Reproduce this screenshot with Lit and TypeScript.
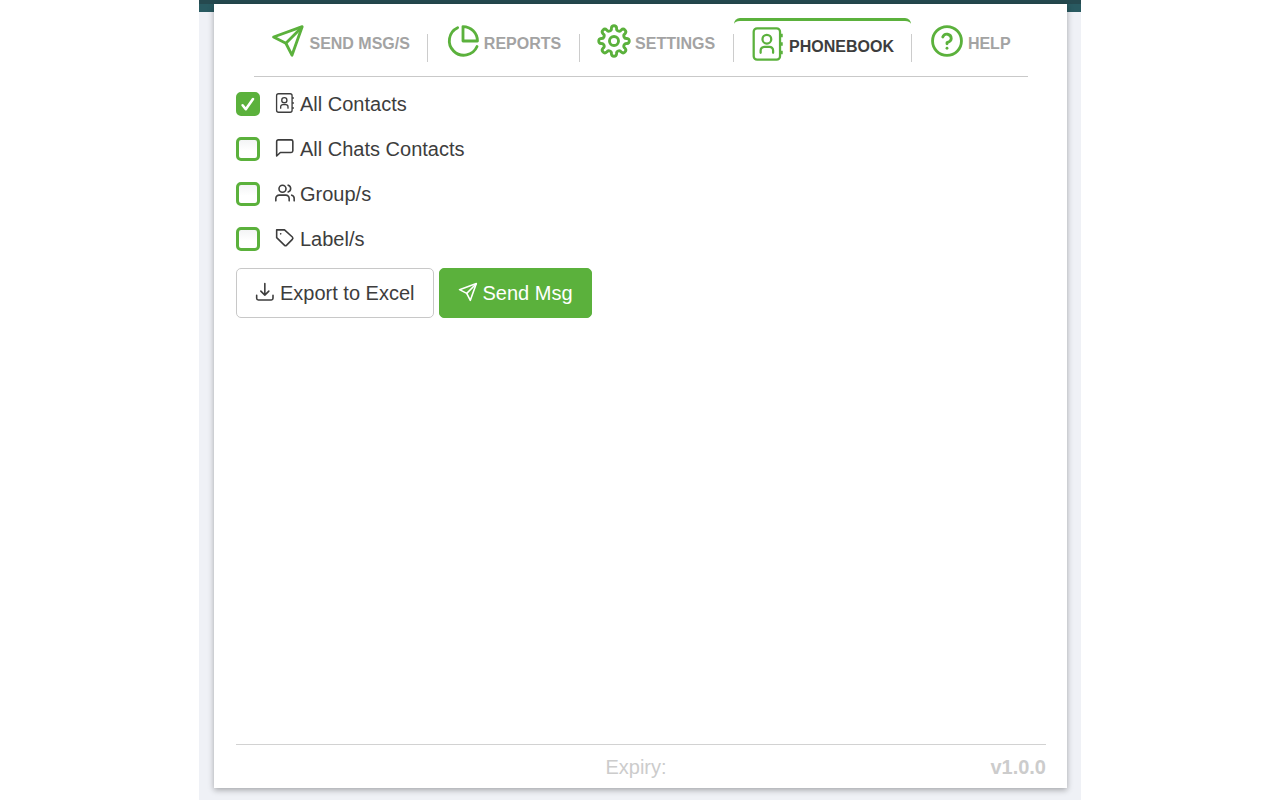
import { LitElement, html, css, svg } from "lit";
import { customElement, state } from "lit/decorators.js";
import { classMap } from "lit/directives/class-map.js";

// Outline of a cog: eight rounded teeth joined by rounded valleys.
function cogPath(teeth = 8, radius = 9.3, half = 11.5): string {
  const at = (deg: number) => {
    const a = (deg * Math.PI) / 180;
    return `${(12 + radius * Math.sin(a)).toFixed(2)} ${(12 - radius * Math.cos(a)).toFixed(2)}`;
  };
  let d = `M${at(-half)}`;
  for (let i = 0; i < teeth; i++) {
    const mid = (i * 360) / teeth;
    d += `A1.86 1.86 0 0 1 ${at(mid + half)}A1.8 1.8 0 0 0 ${at(mid + 360 / teeth - half)}`;
  }
  return d + "Z";
}

const icons = {
  send: svg`<path d="M1.8 9.2 22 1.9 14.8 22 10.5 13.6Z"/><path d="M10.5 13.6 21.6 2.4" />`,
  pie: svg`<path d="M21.9 15.9A10.2 10.2 0 1 1 8.2 2.6"/><path d="M22.2 12A10.2 10.2 0 0 0 12 1.8V12Z"/>`,
  gear: svg`<circle cx="12" cy="12" r="3.2"/><path d=${cogPath()}/>`,
  book: svg`<rect x="1.9" y=".9" width="18.6" height="22.2" rx="2.4"/><circle cx="11.2" cy="8.6" r="3.1"/><path d="M6.8 18.2v-1.6a2.6 2.6 0 0 1 2.6-2.6h3.6a2.6 2.6 0 0 1 2.6 2.6V18.2"/><path stroke-linecap="butt" d="M21.6 4.8v2.5M21.6 10.8v2.5M21.6 16.8v2.5"/>`,
  help: svg`<circle cx="12" cy="12" r="10.2"/><path d="M9 9.2a3.1 3.1 0 0 1 6 1c0 2-3 3-3 3v.8"/><path d="M12 17.1v.1"/>`,
  chat: svg`<path d="M21.4 15.4a2 2 0 0 1-2 2H6.4l-4.4 4.2V4.2a2 2 0 0 1 2-2h15.4a2 2 0 0 1 2 2Z"/>`,
  users: svg`<path d="M17 21.4v-2.9a4 4 0 0 0-4-4H5a4 4 0 0 0-4 4v2.9M23 21.4v-2.9a4 4 0 0 0-3-3.9M15.8 2.6a4.3 4.3 0 0 1 0 8.2"/><circle cx="9" cy="6.8" r="4.2"/>`,
  tag: svg`<path d="m20.8 13.6-6.8 7a2 2 0 0 1-2.8 0L2 11.6V2.2h9.4l9.4 8.6a2 2 0 0 1 0 2.8ZM6.8 7h.1"/>`,
  download: svg`<path d="M2 16v3.600a2 2 0 0 0 2 2h15.6a2 2 0 0 0 2-2V16M7 11l4.8 4.8L16.6 11M11.8 15.8V1.8"/>`,
};
type IconName = keyof typeof icons;

@customElement("ui-icon")
class UiIcon extends LitElement {
  static properties = { name: {}, weight: {} };
  declare name: IconName;
  declare weight: string;
  static styles = css`
    :host { display: block; flex: none; }
    svg { display: block; width: 100%; height: 100%; overflow: visible; fill: none; stroke: currentColor; stroke-linecap: round; stroke-linejoin: round; }
  `;
  render() {
    return html`<svg viewBox="0 0 24 24" stroke-width=${this.weight ?? "1.9"} aria-hidden="true">${icons[this.name]}</svg>`;
  }
}

@customElement("app-root")
class AppRoot extends LitElement {
  @state() private active = "phonebook";

  private tabs: { id: string; label: string; icon: IconName }[] = [
    { id: "send", label: "SEND MSG/S", icon: "send" },
    { id: "reports", label: "REPORTS", icon: "pie" },
    { id: "settings", label: "SETTINGS", icon: "gear" },
    { id: "phonebook", label: "PHONEBOOK", icon: "book" },
    { id: "help", label: "HELP", icon: "help" },
  ];

  private sources: { id: string; label: string; icon: IconName; checked: boolean }[] = [
    { id: "contacts", label: "All Contacts", icon: "book", checked: true },
    { id: "chats", label: "All Chats Contacts", icon: "chat", checked: false },
    { id: "groups", label: "Group/s", icon: "users", checked: false },
    { id: "labels", label: "Label/s", icon: "tag", checked: false },
  ];

  static styles = css`
    :host {
      --green: #5bb13c;
      display: block;
      background: #fff;
      color: #3d3d3d;
      font: 20px/24px "Liberation Sans", Arial, sans-serif;
    }
    * { box-sizing: border-box; }
    .backdrop {
      display: flex;
      max-width: 882px;
      min-height: 100vh;
      margin: 0 auto;
      padding: 4px 14px 12px 15px;
      background: linear-gradient(#25494f 4px, #295a61 4px, #295a61 12px, #eff1f6 12px);
    }
    .card {
      flex: 1;
      display: flex;
      flex-direction: column;
      padding: 14px 21px 0 22px;
      background: #fff;
      box-shadow: 0 2px 6px rgba(0, 0, 0, 0.32);
    }
    .tabs {
      display: flex;
      height: 59px;
      margin: 0 18px;
      padding: 0;
      list-style: none;
      border-bottom: 1px solid #c9c9c9;
    }
    .tab { display: flex; flex: auto; }
    .tab + .tab::before {
      content: "";
      width: 1px;
      height: 28px;
      margin-top: 16px;
      background: #ccc;
    }
    .link {
      flex: 1;
      display: flex;
      justify-content: center;
      gap: 4px;
      height: 48px;
      padding-top: 6px;
      color: #a3a3a3;
      font-size: 16px;
      font-weight: bold;
      line-height: 40px;
      text-decoration: none;
      white-space: nowrap;
    }
    .link ui-icon { width: 34px; height: 34px; color: var(--green); }
    .active .link {
      border-top: 3px solid var(--green);
      border-radius: 6px;
      color: #3d3d3d;
    }
    .sources {
      display: flex;
      flex-direction: column;
      align-items: flex-start;
      gap: 21px;
      margin: 0;
      padding: 15px 0 17px;
      border: 0;
    }
    .source { display: flex; align-items: center; gap: 5px; cursor: pointer; }
    .source ui-icon, .button ui-icon { width: 20px; height: 20px; margin-bottom: 3px; }
    .box {
      appearance: none;
      width: 24px;
      height: 24px;
      margin: 0 10px 0 0;
      border: 3px solid var(--green);
      border-radius: 5px;
      background: linear-gradient(#f3f4f5, #fff 60%);
    }
    .box:checked {
      background: var(--green) url("data:image/svg+xml,%3Csvg xmlns='http://www.w3.org/2000/svg' viewBox='0 0 18 18'%3E%3Cpath d='M3.6 10.3 6.8 14.2 14 4' fill='none' stroke='white' stroke-width='2.6' stroke-linejoin='round' stroke-linecap='round'/%3E%3C/svg%3E") center / 18px no-repeat;
    }
    .actions { display: flex; flex-wrap: wrap; gap: 5px; }
    .button {
      display: flex;
      align-items: center;
      gap: 5px;
      height: 50px;
      padding: 0 18px;
      border: 1px solid #c8c8c8;
      border-radius: 5px;
      background: #fff;
      color: inherit;
      font: inherit;
      cursor: pointer;
    }
    .primary { border-color: var(--green); background: var(--green); color: #fff; }
    .footer {
      display: grid;
      grid-template-columns: 1fr auto 1fr;
      margin-top: auto;
      padding: 10px 0 9px;
      border-top: 1px solid #d2d2d2;
      color: #ccc;
    }
    .expiry { grid-column: 2; padding-right: 10px; }
    .version { text-align: right; font-weight: bold; }
  `;

  render() {
    return html`
      <div class="backdrop">
        <main class="card">
          <nav>
            <ul class="tabs">
              ${this.tabs.map(
                (t) => html`<li class=${classMap({ tab: true, active: t.id === this.active })}>
                  <a class="link" href="#${t.id}" @click=${() => (this.active = t.id)}>
                    <ui-icon name=${t.icon} weight=${t.icon === "book" ? "1.6" : "2"}></ui-icon><span>${t.label}</span>
                  </a>
                </li>`
              )}
            </ul>
          </nav>
          <fieldset class="sources">
            ${this.sources.map(
              (s) => html`<label class="source" for=${s.id}>
                <input class="box" type="checkbox" id=${s.id} .checked=${s.checked} />
                <ui-icon name=${s.icon} weight=${s.icon === "book" ? "1.6" : "1.9"}></ui-icon><span>${s.label}</span>
              </label>`
            )}
          </fieldset>
          <div class="actions">
            <button class="button" type="button"><ui-icon name="download"></ui-icon>Export to Excel</button>
            <button class="button primary" type="button"><ui-icon name="send"></ui-icon>Send Msg</button>
          </div>
          <footer class="footer">
            <span class="expiry">Expiry:</span>
            <span class="version">v1.0.0</span>
          </footer>
        </main>
      </div>
    `;
  }
}
